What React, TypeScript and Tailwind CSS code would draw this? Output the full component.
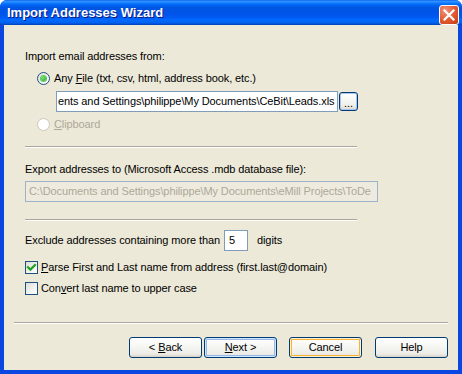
import React from "react";

const btnBase =
  "flex h-[21px] w-[73px] items-center justify-center rounded-[3px] border border-[#003C74] bg-[linear-gradient(180deg,#FFFFFF_0%,#F6F6F3_45%,#ECEBE6_85%,#D6D0C5_100%)] text-[11px] text-black";

function Radio({ checked, disabled }: { checked?: boolean; disabled?: boolean }) {
  return (
    <span
      className={
        disabled
          ? "flex h-[13px] w-[13px] shrink-0 items-center justify-center rounded-full border border-[#CAC8BB] bg-white"
          : "flex h-[13px] w-[13px] shrink-0 items-center justify-center rounded-full border border-[#1C5180] bg-[linear-gradient(135deg,#DCDCD7_0%,#F4F4F2_60%,#FFFFFF_100%)]"
      }
    >
      {checked ? (
        <span className="h-[5px] w-[5px] rounded-full bg-[radial-gradient(circle_at_35%_35%,#7BE07A,#21A121)] shadow-[0_0_0_1px_#5FCB5E]" />
      ) : null}
    </span>
  );
}

function Checkbox({ checked }: { checked?: boolean }) {
  return (
    <span className="flex h-[13px] w-[13px] shrink-0 items-center justify-center border border-[#1C5180] bg-[linear-gradient(135deg,#DCDCD7_0%,#F2F2EE_55%,#FFFFFF_100%)]">
      {checked ? (
        <svg width="11" height="11" viewBox="0 0 11 11">
          <path d="M2 5.2 L4.4 7.6 L9 3" fill="none" stroke="#21A121" strokeWidth="2.2" strokeLinecap="square" />
        </svg>
      ) : null}
    </span>
  );
}

function Separator({ className }: { className: string }) {
  return <div className={"h-[2px] border-t border-b border-t-[#ACA899] border-b-white " + className} />;
}

export default function App() {
  return (
    <div className="flex h-[374px] w-[462px] flex-col overflow-hidden rounded-t-[7px] bg-[#0A46E0] font-['Liberation_Sans',Arial,sans-serif] text-[11px] tracking-[-0.1px] text-black">
      <div className="flex h-[25px] shrink-0 bg-[linear-gradient(180deg,#0058EE_0%,#3593FF_4%,#288EFF_8%,#127DFF_12%,#036FFC_16%,#0262EE_22%,#0057E5_30%,#0054E3_38%,#0055EB_60%,#005BF5_70%,#026AFE_80%,#0062EF_90%,#0052D6_96%,#0040AB_100%)] pl-[7px] pr-[3px]">
        <div className="flex-1 pt-[5px] text-[13px] font-bold leading-[16px] tracking-normal text-white [text-shadow:1px_1px_#0A1883]">
          Import Addresses Wizard
        </div>
        <div className="mt-[5px] flex h-[20px] w-[20px] items-center justify-center rounded-[3px] border border-white bg-[radial-gradient(circle_at_30%_25%,#F0907A,#E2582F_55%,#C43D1A)]">
          <svg width="12" height="12" viewBox="0 0 12 12">
            <path d="M1.5 1.5 L10.5 10.5 M10.5 1.5 L1.5 10.5" stroke="white" strokeWidth="2.2" strokeLinecap="square" />
          </svg>
        </div>
      </div>

      <div className="mx-[4px] mb-[4px] flex flex-1 flex-col bg-[#ECE9D8]">
        <div className="flex flex-col pl-[21px] pt-[25px]">
          <div className="h-[13px] leading-[13px]">Import email addresses from:</div>

          <div className="ml-[12px] mt-[9px] flex h-[13px] items-center gap-[4px] leading-[13px]">
            <Radio checked />
            <span>
              Any <span className="underline">F</span>ile (txt, csv, html, address book, etc.)
            </span>
          </div>

          <div className="ml-[31px] mt-[6px] flex items-center">
            <div className="flex h-[21px] w-[282px] items-center whitespace-nowrap border border-[#7F9DB9] bg-white pl-[1px]">
              ents and Settings\philippe\My Documents\CeBit\Leads.xls
            </div>
            <div className="ml-[1px] flex h-[19px] w-[19px] items-end justify-center rounded-[3px] border border-[#003C74] bg-[linear-gradient(180deg,#FFFFFF_0%,#F0F0EC_70%,#DCD8CC_100%)] pb-[2px] leading-[10px] shadow-[inset_0_0_0_1px_#A9C4F3]">
              ...
            </div>
          </div>

          <div className="ml-[12px] mt-[6px] flex h-[13px] items-center gap-[4px] leading-[13px] text-[#ACA899]">
            <Radio disabled />
            <span>
              <span className="underline">C</span>lipboard
            </span>
          </div>

          <Separator className="mt-[15px] w-[332px]" />

          <div className="mt-[15px] h-[13px] leading-[13px]">Export addresses to (Microsoft Access .mdb database file):</div>

          <div className="mt-[5px] flex h-[21px] w-[353px] items-center whitespace-nowrap border border-[#9DB3CB] bg-[#EEEBDE] pl-[3px] text-[#ACA899]">
            C:\Documents and Settings\philippe\My Documents\eMill Projects\ToDe
          </div>

          <Separator className="mt-[17px] w-[332px]" />

          <div className="mt-[9px] flex h-[21px] items-center">
            <span className="w-[199px]">Exclude addresses containing more than</span>
            <div className="flex h-[21px] w-[24px] items-center border border-[#7F9DB9] bg-white pl-[4px]">5</div>
            <span className="ml-[9px]">digits</span>
          </div>

          <div className="mt-[10px] flex h-[13px] items-center gap-[3px] leading-[13px]">
            <Checkbox checked />
            <span>
              <span className="underline">P</span>arse First and Last name from address (first.last@domain)
            </span>
          </div>

          <div className="mt-[8px] flex h-[13px] items-center gap-[3px] leading-[13px]">
            <Checkbox />
            <span>
              Con<span className="underline">v</span>ert last name to upper case
            </span>
          </div>
        </div>

        <Separator className="mx-[10px] mt-[27px]" />

        <div className="mt-[13px] flex justify-end pr-[10px]">
          <div className={btnBase}>
            &lt; <span className="ml-[3px] underline">B</span>ack
          </div>
          <div className={btnBase + " ml-[2px] shadow-[inset_0_0_0_1px_#CEE7FF,inset_0_0_0_2px_#98B8EA]"}>
            <span className="underline">N</span>ext &gt;
          </div>
          <div className={btnBase + " ml-[12px] shadow-[inset_0_0_0_1px_#FFF0CF,inset_0_0_0_2px_#F8B330]"}>Cancel</div>
          <div className={btnBase + " ml-[13px]"}>Help</div>
        </div>
      </div>
    </div>
  );
}
